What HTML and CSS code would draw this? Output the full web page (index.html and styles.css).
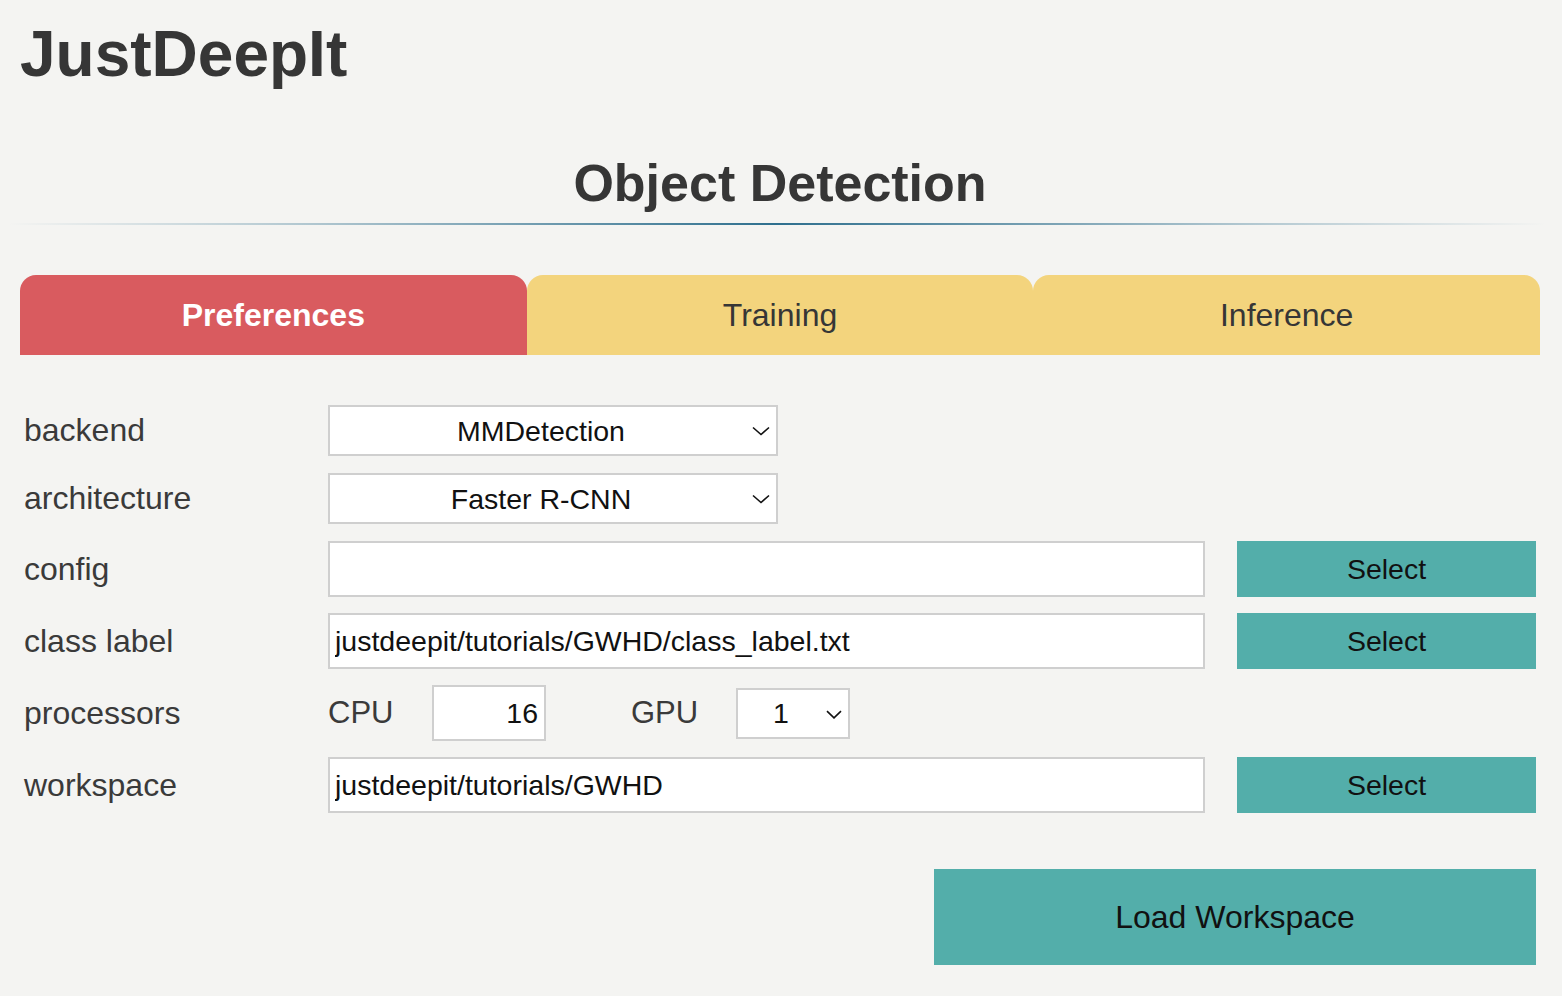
FILE: index.html
```html
<!DOCTYPE html>
<html lang="en">
<head>
<meta charset="utf-8">
<title>JustDeepIt</title>
<link rel="stylesheet" href="styles.css">
</head>
<body>
<div class="page">
  <h1 class="brand">JustDeepIt</h1>
  <h2 class="module-title">Object Detection</h2>
  <div class="rule"></div>

  <nav class="tabs">
    <div class="tab tab-active">Preferences</div>
    <div class="tab">Training</div>
    <div class="tab">Inference</div>
  </nav>

  <form class="form">
    <div class="row row-select">
      <label class="label">backend</label>
      <span class="select-wrap wide">
        <select class="select"><option>MMDetection</option></select>
        <svg class="chev" width="18" height="10" viewBox="0 0 18 10"><path d="M1 1.5 L9 8.5 L17 1.5" fill="none" stroke="#111" stroke-width="1.6"/></svg>
      </span>
    </div>
    <div class="row row-select">
      <label class="label">architecture</label>
      <span class="select-wrap wide">
        <select class="select"><option>Faster R-CNN</option></select>
        <svg class="chev" width="18" height="10" viewBox="0 0 18 10"><path d="M1 1.5 L9 8.5 L17 1.5" fill="none" stroke="#111" stroke-width="1.6"/></svg>
      </span>
    </div>
    <div class="row">
      <label class="label">config</label>
      <input class="text" type="text" value="">
      <button type="button" class="btn">Select</button>
    </div>
    <div class="row">
      <label class="label">class label</label>
      <input class="text" type="text" value="justdeepit/tutorials/GWHD/class_label.txt">
      <button type="button" class="btn">Select</button>
    </div>
    <div class="row">
      <label class="label">processors</label>
      <div class="procs">
        <span class="sub">CPU</span>
        <input class="num" type="text" value="16">
        <span class="sub gpu">GPU</span>
        <span class="select-wrap small">
          <select class="select"><option>1</option></select>
          <svg class="chev chev-s" width="16" height="9" viewBox="0 0 16 9"><path d="M1 1.2 L8 7.8 L15 1.2" fill="none" stroke="#111" stroke-width="1.6"/></svg>
        </span>
      </div>
    </div>
    <div class="row">
      <label class="label">workspace</label>
      <input class="text" type="text" value="justdeepit/tutorials/GWHD">
      <button type="button" class="btn">Select</button>
    </div>

    <div class="actions">
      <button type="button" class="btn btn-load">Load Workspace</button>
    </div>
  </form>
</div>
</body>
</html>
```

FILE: styles.css
```css
* { box-sizing: border-box; }

html, body {
  margin: 0;
  padding: 0;
  background: #f4f4f2;
}

body {
  font-family: "Liberation Sans", Arial, Helvetica, sans-serif;
  color: #363636;
}

.page {
  width: 1562px;
  padding: 18px 22px 0 20px;
}

.brand {
  margin: 0;
  font-size: 64px;
  line-height: 72px;
  font-weight: bold;
  color: #363636;
}

.module-title {
  margin: 63px 0 0 0;
  font-size: 52px;
  line-height: 60px;
  font-weight: bold;
  text-align: center;
  color: #363636;
}

.rule {
  margin: 10px -6px 0 -12px;
  height: 2px;
  background: linear-gradient(to right, rgba(46, 111, 142, 0), rgba(46, 111, 142, 0.35) 20%, #2e6f8e 50%, rgba(46, 111, 142, 0.35) 80%, rgba(46, 111, 142, 0));
}

.tabs {
  display: flex;
  margin-top: 50px;
  height: 80px;
}

.tab {
  flex: 1 1 0;
  background: #f3d47d;
  border-radius: 16px 16px 0 0;
  font-size: 32px;
  line-height: 80px;
  text-align: center;
  color: #363636;
}

.tab-active {
  background: #d95b5f;
  color: #ffffff;
  font-weight: bold;
}

.form {
  margin: 50px 4px 0 0;
  display: flex;
  flex-direction: column;
}

.row {
  display: flex;
  align-items: center;
  height: 56px;
  margin-bottom: 16px;
}

.row-select {
  height: 51px;
  margin-bottom: 17px;
}

.label {
  width: 308px;
  flex: none;
  padding-left: 4px;
  font-size: 32px;
  color: #3a3a3a;
}

.select-wrap {
  position: relative;
  display: inline-block;
  height: 51px;
}

.select-wrap.wide { width: 450px; }
.select-wrap.small { width: 114px; }

.select {
  -webkit-appearance: none;
  appearance: none;
  width: 100%;
  height: 100%;
  margin: 0;
  border: 2px solid #cfcfcf;
  border-radius: 0;
  background: #ffffff;
  font-family: "Liberation Sans", Arial, Helvetica, sans-serif;
  font-size: 28.5px;
  color: #111111;
  text-align: center;
  text-align-last: center;
  padding: 0 24px 0 0;
  outline: none;
}

.chev {
  position: absolute;
  right: 8px;
  top: 21px;
  pointer-events: none;
}

.chev-s {
  top: 22px;
}

.text {
  width: 877px;
  height: 56px;
  flex: none;
  margin: 0;
  border: 2px solid #cfcfcf;
  border-radius: 0;
  background: #ffffff;
  padding: 0 5px;
  font-family: "Liberation Sans", Arial, Helvetica, sans-serif;
  font-size: 28.5px;
  color: #111111;
  outline: none;
}

.btn {
  border: none;
  border-radius: 0;
  margin: 0;
  background: #53aeaa;
  color: #111111;
  font-family: "Liberation Sans", Arial, Helvetica, sans-serif;
  font-size: 28.5px;
  cursor: pointer;
}

.row .btn {
  width: 299px;
  height: 56px;
  margin-left: 32px;
}

.procs {
  display: flex;
  align-items: center;
}

.sub {
  font-size: 31px;
  color: #3a3a3a;
  width: 104px;
}

.sub.gpu {
  width: 105px;
}

.num {
  width: 114px;
  height: 56px;
  margin: 0 85px 0 0;
  border: 2px solid #cfcfcf;
  border-radius: 0;
  background: #ffffff;
  padding: 0 6px;
  text-align: right;
  font-family: "Liberation Sans", Arial, Helvetica, sans-serif;
  font-size: 28.5px;
  color: #111111;
  outline: none;
}

.actions {
  display: flex;
  justify-content: flex-end;
  margin-top: 40px;
}

.btn-load {
  width: 602px;
  height: 96px;
  font-size: 32px;
}
```
